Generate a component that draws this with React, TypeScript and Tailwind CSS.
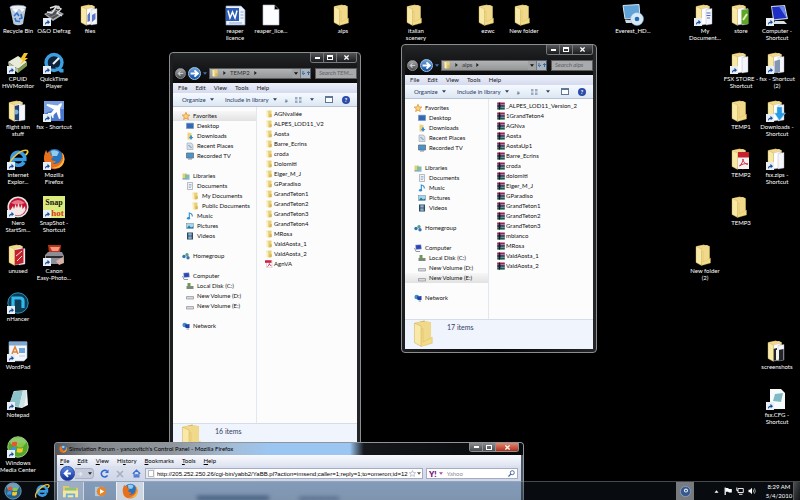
import React from 'react';

type P = { className?: string };

/* ---------- drawings ---------- */

function Folder({ kind = 'plain', className = 'size-[22px]' }: P & { kind?: string }) {
  return (
    <svg viewBox="1 0 22 22" className={className} aria-hidden="true">
      <path d="M3 2.500 L11 0.500 L12 1.500 L16.500 2 V18.500 L8 20Z" fill="#d3b158" />
      <path d="M4 2 L14 1 L16.500 2.500 V18.500 L4 18.500Z" fill="#f0d98a" />
      {kind !== 'plain' && <path d="M8.500 5 L15 3.500 V20 L8.500 21Z" fill="#fff" stroke="#b9bcc4" strokeWidth=".4" />}
      {kind !== 'plain' && <path d="M13 5.500 L19 4.500 V20 L13 21Z" fill="#f4f6fb" stroke="#a9adb8" strokeWidth=".4" />}
      {kind === 'files' && <path d="M9.500 11 L12 8 V17 L9.500 18Z M14 11 L17.500 9 V15 L14 18Z" fill="#5d76c9" />}
      {kind === 'sim' && <path d="M8.500 6 L13 5 V20 L8.500 20Z" fill="#1d4377" />}
      {kind === 'sim' && <circle cx="10" cy="12" r="2.500" fill="#7fb0e0" />}
      {kind === 'red' && <path d="M8.500 6 L17.500 4.500 V19 L8.500 21Z" fill="#c3202c" />}
      {kind === 'red' && <path d="M10 12 L16 7 M11 17 L16 12" stroke="#f8d9d9" strokeWidth="1" />}
      {kind === 'green' && <path d="M12.500 6 L19.500 5 V20 L12.500 20.500Z" fill="#5fa526" />}
      {kind === 'green' && <path d="M14 16 L18 10" stroke="#dff2b5" strokeWidth="2" />}
      {kind === 'docs' && <path d="M13.500 9 h4 M13.500 11.500 h4 M14 14 h3" stroke="#4d6bd0" strokeWidth="1.200" />}
      {kind === 'book' && <path d="M9.500 9 L15 7.500 V20 L9.500 21Z" fill="#8496b4" />}
      {kind === 'pdf' && <path d="M9 4 L20 4 V21 L9 21Z" fill="#f8f4f4" />}
      {kind === 'pdf' && <path d="M9 4 H20 V9.500 H9Z" fill="#c8202c" />}
      {kind === 'pdf' && <path d="M10.500 18 C13 16 14.500 12 14 11 C13.500 13 17 17 19 16 C16 15 12 16.500 10.500 18Z" fill="none" stroke="#c8202c" strokeWidth=".9" />}
      {kind === 'shots' && <path d="M8 9 L12 8 V20 L8 21Z M13.500 10 L18.500 9 V20 L13.500 21Z" fill="#23252b" />}
      {kind === 'shots' && <path d="M11 10 L14 9.500 V19.500 L11 20Z" fill="#f2f2f2" />}
      {kind === 'down' && <path d="M12 7 h5 v6 h3.500 L14.500 20.500 L9.500 13 H12Z" fill="#2a9be2" stroke="#9ad6fa" strokeWidth=".5" />}
      <path d="M3 2.500 L8.500 5 V21.500 L3 18.500Z" fill="#f8e9a8" stroke="#c9a952" strokeWidth=".4" />
      {kind === 'plain' && <path d="M8.500 21.500 V8 L10 7 L10 18 L17.500 14 V19Z" fill="#f2dc88" stroke="#cfae55" strokeWidth=".3" />}
    </svg>
  );
}

function Art({ name }: { name: string }) {
  if (name.startsWith('folder-')) return <Folder kind={name.slice(7)} />;
  return (
    <svg viewBox="0 0 22 22" className="size-[22px]" aria-hidden="true">
      {name === 'bin' && (
        <g>
          <path d="M3 3.500 L19 3 L16 20 Q11 22.500 6.500 20Z" fill="#b9c8da" />
          <ellipse cx="11" cy="3.500" rx="8" ry="2.300" fill="#e9eff6" stroke="#8e9db2" strokeWidth=".6" />
          <path d="M5 5 L9 9 L12 4 L15 8 L18 5" fill="#f7f9fc" />
          <path d="M7 12 l3 -3 2 3 M14 10 l1 4 -3 1 M8 14 l1 3 4 .5" fill="none" stroke="#3273cf" strokeWidth="1.600" />
        </g>
      )}
      {name === 'defrag' && (
        <g>
          <path d="M1 10 L12 5 L21 10 L10 17Z" fill="#a9abae" />
          <path d="M3 10 L12 6 L18 10 L10 15Z" fill="#4c4f55" />
          <path d="M3 12 L12 7 M6 14 L16 9" stroke="#8f9296" strokeWidth=".8" />
          <path d="M7 4 L13 2 L18 5 L14 9 L19 12 M13 3 L9 9 L4 8" fill="none" stroke="#e2e2e2" strokeWidth="1.400" />
          <circle cx="15" cy="3.500" r="2" fill="#c8cacc" />
        </g>
      )}
      {name === 'cpuid' && (
        <g>
          <path d="M1 10 L11 4 L20 10 L11 17Z" fill="#e6ecd9" />
          <path d="M1 10 L11 17 V21 L2 15Z" fill="#b4bfa4" />
          <path d="M11 17 L20 10 V14 L11 21Z" fill="#7e9a4e" />
          <path d="M17 1 L13 7.500 H16 L13 13 L21 6 H18 L21 1Z" fill="#f6c428" />
        </g>
      )}
      {name === 'quicktime' && (
        <g>
          <circle cx="11" cy="10.500" r="8" fill="#0e2239" stroke="#3c9fe0" strokeWidth="3.400" />
          <path d="M10 12 L16 6" stroke="#e6f3fd" strokeWidth="2" />
          <path d="M12 15 L17 20.500 H20.500 V17Z" fill="#3c9fe0" />
        </g>
      )}
      {name === 'fsx' && (
        <g>
          <rect x="1" y="1" width="20" height="20" fill="#4a78cf" />
          <path d="M1 1 H21 V9 Q10 9 1 14Z" fill="#7b9fe3" />
          <path d="M18.500 3 Q17 3 14.500 5.500 L4 4 L3.500 5.500 L11 9.500 L8 13 L5 13 L5 14 L8 15 L9.500 18 L10.500 18 L10.500 15 L13.500 12 L16 19 L17.500 18.500 L17 8 Q19.500 5 18.500 3Z" fill="#fff" />
        </g>
      )}
      {name === 'ie' && <IeMark />}
      {name === 'firefox' && <FirefoxMark />}
      {name === 'nero' && (
        <g>
          <circle cx="11" cy="11" r="9.800" fill="#c3122f" stroke="#e3e3e3" strokeWidth="1.600" />
          <path d="M4 7 Q11 1 18 7 Q11 10 4 7Z" fill="#e87787" />
          <path d="M3.500 14 L6 10 L7 13 L8.500 8 L10 12 L11.500 7 L13 12 L15 8 L15.500 13 L18 10 L18.500 14 Q16 19 11 19.500 Q6 19 3.500 14Z" fill="#f4e8e6" />
        </g>
      )}
      {name === 'snapshot' && (
        <g>
          <rect width="22" height="22" fill="#dcec7c" />
          <text x="11" y="9" textAnchor="middle" fontSize="8" fontWeight="bold" fontFamily="Liberation Serif, serif" fill="#141414">Snap</text>
          <text x="12" y="20" textAnchor="middle" fontSize="9" fontWeight="bold" fontFamily="Liberation Serif, serif" fill="#d8331c">Shot</text>
        </g>
      )}
      {name === 'canon' && (
        <g>
          <path d="M5 1 H18 L17 9 H6Z" fill="#b5331f" />
          <path d="M7 3 H17 L15 7 H9Z" fill="#f49a7a" />
          <path d="M2 11 L5 8 H19 L21 12 V18 L17 20 H5 L2 16Z" fill="#8b8f95" />
          <path d="M3 12 H20 V14 H3Z" fill="#2b2d31" />
          <path d="M13 17 L20 13 L21 19 L16 21Z" fill="#d7b1a4" />
        </g>
      )}
      {name === 'nhancer' && (
        <g>
          <circle cx="11" cy="11" r="10.200" fill="#0d3c55" stroke="#2b93bb" strokeWidth="1" />
          <path d="M6 16 V6 H13 Q16 6 16 9 V16" fill="none" stroke="#31b9ee" strokeWidth="3.200" />
        </g>
      )}
      {name === 'wordpad' && (
        <g>
          <path d="M2 2 H20 V18 L17 21 H2Z" fill="#f3f7fb" stroke="#9ab6cf" strokeWidth=".6" />
          <rect x="2" y="1.500" width="18" height="4" fill="#7ea8cf" />
          <path d="M5 14 L8 7 L11 14 M6 12 H10" fill="none" stroke="#e58232" strokeWidth="1.500" />
          <rect x="12" y="8" width="6" height="5" fill="#6fa6da" />
          <path d="M12 16 H18" stroke="#c4cfda" />
        </g>
      )}
      {name === 'notepad' && (
        <g>
          <path d="M7 3 L20 2 L21 17 L15 20 L2 18Z" fill="#eef3f4" />
          <path d="M6.500 3.500 L16 2.500 L12 19 L2 17.500Z" fill="#8cc3cb" />
          <path d="M16 2.500 L20 3 L17 19 L12 19Z" fill="#cfe3e6" />
        </g>
      )}
      {name === 'media' && (
        <g>
          <circle cx="11" cy="11" r="10.300" fill="#53a82c" stroke="#b5dd97" strokeWidth=".8" />
          <ellipse cx="11" cy="6" rx="8" ry="4.500" fill="#a8d888" opacity=".7" />
          <WinFlag />
        </g>
      )}
      {name === 'word' && (
        <g>
          <path d="M2 2 H17 L21 6 V21 H2Z" fill="#eef3fb" stroke="#7f9cd0" strokeWidth=".7" />
          <rect x="2" y="4" width="13" height="13" fill="#2c5cb4" />
          <path d="M4 6.500 L6 14 L8.500 8 L11 14 L13 6.500" fill="none" stroke="#fff" strokeWidth="1.500" />
          <path d="M16.500 8 H19.500 M16.500 11 H19.500 M16.500 14 H19.500 M5 19 H18" stroke="#8fa7d4" />
        </g>
      )}
      {name === 'page' && <path d="M3 1 H14.500 L19 5.500 V21 H3Z M14.500 1 V5.500 H19" fill="#fcfdff" stroke="#b9bec8" strokeWidth=".6" />}
      {name === 'everest' && (
        <g>
          <path d="M1 1.500 L17 .500 L18 14 L3 15Z" fill="#5fa3d8" stroke="#d5e4f0" strokeWidth="1" />
          <path d="M3 16 H14 L15 19 H4Z" fill="#cdd8e3" />
          <circle cx="15" cy="15" r="6.500" fill="#d6e9f7" stroke="#7fa9ca" strokeWidth=".5" />
          <circle cx="15" cy="15" r="2.300" fill="#276cae" />
        </g>
      )}
      {name === 'computer' && (
        <g>
          <path d="M5 2 L19 1 L22 15 L7 16.500Z" fill="#c8d2e2" />
          <path d="M6 3 L18 2.200 L20.500 14 L8 15.200Z" fill="#1d2fc4" />
          <path d="M13 2.500 L18 2.200 L20.500 14Z" fill="#6b85ee" />
          <path d="M9 17 H18 L21 20 H7Z" fill="#d9dee6" />
        </g>
      )}
      {name === 'cfg' && (
        <g>
          <path d="M4 1 H15 L19 5 V21 H4Z" fill="#f7fafb" />
          <path d="M9 6 L17 5 L15 14 L7 13Z" fill="#7fbac4" />
        </g>
      )}
    </svg>
  );
}

function IeMark() {
  return (
    <g>
      <path d="M17 14 A6.500 6.500 0 1 1 17.800 11.500 H6" fill="none" stroke="#3b9be2" strokeWidth="3.600" />
      <path d="M3 20 Q0 16 7 9 Q15 1 20 2.500 Q22 4 18.500 7" fill="none" stroke="#f2c33c" strokeWidth="1.700" />
    </g>
  );
}

function FirefoxMark() {
  return (
    <g>
      <circle cx="11.500" cy="9.500" r="8.500" fill="#2873bd" />
      <path d="M8 3 Q12 1 16 4 L14 8 L9 8Z" fill="#8fccf2" />
      <path d="M3 2 Q.500 8 1 12 Q2 21 11.500 21.300 Q21 20.500 21.500 11 Q21.500 6.500 18.500 4 Q20 9 17.500 13 Q14 17.500 9.500 15.500 Q12.500 15 13 13 Q9 13 8 11 L10.500 9 L7.500 7 Q7 5 8 3.500 Q5.500 4 4.500 5Z" fill="#e8701c" />
      <path d="M18.500 4 Q21.500 9 19 14 Q16 19.500 9 19.500 Q18 22 21 14 Q22.500 8 18.500 4Z" fill="#f9b73e" />
    </g>
  );
}

function WinFlag() {
  return (
    <g>
      <path d="M5 6.500 Q7.500 5 10.300 6.300 L9.600 10.500 Q7 9.300 4.300 10.800Z" fill="#e8562a" />
      <path d="M11.300 6.600 Q14 8 17 6.600 L16.300 10.800 Q13.500 12 10.600 10.900Z" fill="#8cc63e" />
      <path d="M4.100 11.800 Q7 10.400 9.400 11.600 L8.700 15.600 Q6 14.500 3.500 16Z" fill="#3d95dc" />
      <path d="M10.400 12 Q13.200 13.200 16.100 12 L15.400 16 Q12.500 17.300 9.700 16.100Z" fill="#fbc72e" />
    </g>
  );
}

function Small({ name }: { name: string }) {
  return (
    <svg viewBox="0 0 8 8" className="size-[8px] shrink-0" aria-hidden="true">
      {name === 'star' && <path d="M4 .3 L5.100 2.900 L7.800 3.100 L5.700 4.900 L6.400 7.600 L4 6.100 L1.600 7.600 L2.300 4.900 L.2 3.100 L2.900 2.900Z" fill="#fbd27c" stroke="#e38b1f" strokeWidth=".7" />}
      {name === 'desktop' && <path d="M.5 1.200 H7.500 V6.500 H.5Z" fill="#3569b4" stroke="#6e8fbd" strokeWidth=".6" />}
      {name === 'downloads' && <g><path d="M1.500 .5 L5.500 1 V7.500 H1.500Z" fill="#ecd27a" /><path d="M4 3.500 H6 V5 H7.500 L5 7.800 L2.800 5 H4Z" fill="#3d8fd2" /></g>}
      {name === 'recent' && <g><path d="M1 1 H5.500 L7 3 V7.500 H1Z" fill="#d6dee7" stroke="#8895a5" strokeWidth=".5" /><path d="M2.500 3 L5.500 6" stroke="#6f8aa8" /></g>}
      {name === 'tv' && <path d="M.5 1 H7.500 V6 H.5Z M2 7 H6" fill="#4b94c8" stroke="#5d7389" strokeWidth=".8" />}
      {name === 'libraries' && <g><rect x=".5" y="1.500" width="4.500" height="5.500" fill="#e5cf73" /><rect x="3" y="2.500" width="4.500" height="4" fill="#82bba8" /><path d="M.5 7 H7.500" stroke="#4c98c9" /></g>}
      {name === 'documents' && <g><path d="M1.500 .5 H6.500 V7.500 H1.500Z" fill="#f2f4f7" stroke="#8993a1" strokeWidth=".6" /><path d="M2.800 2.500 H5.500 M2.800 4 H5.500 M2.800 5.500 H5" stroke="#7691b4" strokeWidth=".6" /></g>}
      {name === 'music' && <path d="M3.300 6.300 V1 Q6.500 1.500 6.300 4.500" fill="none" stroke="#2f8fd0" strokeWidth="1.100" />}
      {name === 'music' && <ellipse cx="2.500" cy="6.300" rx="1.600" ry="1.200" fill="#2f8fd0" />}
      {name === 'pictures' && <g><rect x=".5" y="1.500" width="7" height="5" fill="#a8d6ea" stroke="#6f8594" strokeWidth=".5" /><path d="M.8 6.300 L3 3.500 L5 5.500 L7.200 4.500 V6.300Z" fill="#237aa6" /></g>}
      {name === 'videos' && <g><rect x="1" y=".5" width="6" height="7" fill="#31475c" /><rect x="2.300" y="1.200" width="3.400" height="2.400" fill="#87b2d3" /><rect x="2.300" y="4.400" width="3.400" height="2.400" fill="#87b2d3" /></g>}
      {name === 'homegroup' && <g><circle cx="2" cy="4.500" r="1.700" fill="#3277a6" /><circle cx="5" cy="2.700" r="1.700" fill="#5c9c8c" /><circle cx="6" cy="5.800" r="1.700" fill="#3a74b5" /></g>}
      {name === 'computer' && <g><path d="M1.500 1 L7 .7 L7.500 5 L2 5.500Z" fill="#2945b8" stroke="#aab4c6" strokeWidth=".5" /><path d="M.5 4 L2 7.500 H6" stroke="#8b96a8" fill="none" /></g>}
      {name === 'disk' && <g><path d="M.5 4 H7.500 V7 H.5Z" fill="#7d8a77" /><path d="M1.500 1 H4.500 V4 H1.500Z" fill="#6e9a4c" /></g>}
      {name === 'drive' && <path d="M.5 4.500 H7.500 V7 H.5Z" fill="#d8dadd" stroke="#8c9096" strokeWidth=".7" />}
      {name === 'network' && <g><circle cx="2.700" cy="3" r="2.300" fill="#3c8fca" /><path d="M3 2.500 L7.500 2 V6 H3.500Z" fill="#2340a8" /><path d="M4.500 7 H7" stroke="#8793a8" /></g>}
      {name === 'folder' && <g><path d="M1.500 .7 L6.500 .5 V7 L3 7.500Z" fill="#e9cf77" /><path d="M1.500 .7 L3.300 1.500 V7.700 L1.500 7Z" fill="#fbeeb6" /><path d="M4.500 4.500 L6.700 4 V7 L4.500 7.500Z" fill="#d8b553" /></g>}
      {name === 'rar' && <g><rect x=".2" y=".5" width="7.600" height="2.300" fill="#96244f" /><rect x=".2" y="2.900" width="7.600" height="2.200" fill="#27356b" /><rect x=".2" y="5.200" width="7.600" height="2.400" fill="#1c5c49" /><path d="M2.500 .5 V7.600" stroke="#20151a" strokeWidth="1.200" /><path d="M4 2.800 H7.800 M4 5.100 H7.800" stroke="#e8e2e6" strokeWidth=".4" /></g>}
      {name === 'pdf' && <g><path d="M1.500 .3 H7 V7.700 H1.500Z" fill="#fff" stroke="#c9a5ab" strokeWidth=".4" /><rect x="0" y=".3" width="6.500" height="2.500" fill="#cf1f3e" /><path d="M2.500 6.700 Q4.500 5 4.300 3.500 Q4.500 5.500 6.500 5.800" fill="none" stroke="#cf1f3e" strokeWidth=".8" /></g>}
    </svg>
  );
}

function Caret({ className = 'text-[#2c3f5c]' }: P) {
  return (
    <svg viewBox="0 0 4 3" className={`h-[3px] w-[4px] shrink-0 ${className}`} aria-hidden="true">
      <path d="M0 .3 H4 L2 2.800Z" fill="currentColor" />
    </svg>
  );
}

function Right() {
  return (
    <svg viewBox="0 0 3 4" className="h-[4px] w-[3px] shrink-0" aria-hidden="true">
      <path d="M.3 0 V4 L2.800 2Z" fill="#222" />
    </svg>
  );
}

/* ---------- desktop shortcuts ---------- */

type Shortcut = { col: number; row: number; art: string; label: string; link?: boolean };

const shortcuts: Shortcut[] = [
  { col: 0, row: 0, art: 'bin', label: 'Recycle Bin' },
  { col: 1, row: 0, art: 'defrag', label: 'O&O Defrag', link: true },
  { col: 2, row: 0, art: 'folder-files', label: 'files' },
  { col: 0, row: 1, art: 'cpuid', label: 'CPUID\nHWMonitor', link: true },
  { col: 1, row: 1, art: 'quicktime', label: 'QuickTime\nPlayer', link: true },
  { col: 0, row: 2, art: 'folder-sim', label: 'flight sim\nstuff' },
  { col: 1, row: 2, art: 'fsx', label: 'fsx - Shortcut', link: true },
  { col: 0, row: 3, art: 'ie', label: 'Internet\nExplor...', link: true },
  { col: 1, row: 3, art: 'firefox', label: 'Mozilla\nFirefox', link: true },
  { col: 0, row: 4, art: 'nero', label: 'Nero\nStartSm...', link: true },
  { col: 1, row: 4, art: 'snapshot', label: 'SnapShot -\nShortcut', link: true },
  { col: 0, row: 5, art: 'folder-red', label: 'unused' },
  { col: 1, row: 5, art: 'canon', label: 'Canon\nEasy-Photo...', link: true },
  { col: 0, row: 6, art: 'nhancer', label: 'nHancer', link: true },
  { col: 0, row: 7, art: 'wordpad', label: 'WordPad', link: true },
  { col: 0, row: 8, art: 'notepad', label: 'Notepad', link: true },
  { col: 0, row: 9, art: 'media', label: 'Windows\nMedia Center', link: true },
  { col: 6, row: 0, art: 'word', label: 'reaper\nlicence' },
  { col: 7, row: 0, art: 'page', label: 'reaper_lice...' },
  { col: 9, row: 0, art: 'folder-plain', label: 'alps' },
  { col: 11, row: 0, art: 'folder-plain', label: 'italian\nscenery' },
  { col: 13, row: 0, art: 'folder-plain', label: 'ezwc' },
  { col: 14, row: 0, art: 'folder-plain', label: 'New folder' },
  { col: 17, row: 0, art: 'everest', label: 'Everest_HD...' },
  { col: 19, row: 0, art: 'folder-docs', label: 'My\nDocument...', link: true },
  { col: 20, row: 0, art: 'folder-green', label: 'store' },
  { col: 21, row: 0, art: 'computer', label: 'Computer -\nShortcut', link: true },
  { col: 20, row: 1, art: 'folder-papers', label: 'FSX STORE -\nShortcut', link: true },
  { col: 21, row: 1, art: 'folder-book', label: 'fsx - Shortcut\n(2)', link: true },
  { col: 20, row: 2, art: 'folder-plain', label: 'TEMP1' },
  { col: 21, row: 2, art: 'folder-down', label: 'Downloads -\nShortcut', link: true },
  { col: 20, row: 3, art: 'folder-pdf', label: 'TEMP2' },
  { col: 21, row: 3, art: 'folder-papers', label: 'fsx.zips -\nShortcut', link: true },
  { col: 20, row: 4, art: 'folder-plain', label: 'TEMP3' },
  { col: 19, row: 5, art: 'folder-plain', label: 'New folder\n(2)' },
  { col: 21, row: 7, art: 'folder-shots', label: 'screenshots' },
  { col: 21, row: 8, art: 'cfg', label: 'fsx.CFG -\nShortcut', link: true },
];

const COLUMN = 36.15;
const ROW = 48;

function DesktopIcon({ item }: { item: Shortcut }) {
  return (
    <button
      type="button"
      className="absolute flex w-9 flex-col items-center gap-px text-white"
      style={{ left: Math.round(item.col * COLUMN), top: item.row * ROW + 4 }}
    >
      <span className="relative">
        <Art name={item.art} />
        {item.link && (
          <svg viewBox="0 0 8 8" className="absolute bottom-0 left-0 size-[8px]" aria-hidden="true">
            <rect width="8" height="8" fill="#e8eef6" />
            <path d="M2 7 Q1.500 4 4.500 3.500 V1.800 L7 4.200 L4.700 6.300 V5 Q3 5 2 7Z" fill="#1c4f98" />
          </svg>
        )}
      </span>
      <span className="text-center leading-[7px] whitespace-pre">{item.label}</span>
    </button>
  );
}

/* ---------- explorer windows ---------- */

type Node = { icon: string; label: string; depth?: number; gap?: boolean; active?: boolean };

function tree(extra: Node[], active: string): Node[] {
  const nodes: Node[] = [
    { icon: 'star', label: 'Favorites' },
    { icon: 'desktop', label: 'Desktop', depth: 1 },
    { icon: 'downloads', label: 'Downloads', depth: 1 },
    { icon: 'recent', label: 'Recent Places', depth: 1 },
    { icon: 'tv', label: 'Recorded TV', depth: 1 },
    { icon: 'libraries', label: 'Libraries', gap: true },
    { icon: 'documents', label: 'Documents', depth: 1 },
    ...extra,
    { icon: 'music', label: 'Music', depth: 1 },
    { icon: 'pictures', label: 'Pictures', depth: 1 },
    { icon: 'videos', label: 'Videos', depth: 1 },
    { icon: 'homegroup', label: 'Homegroup', gap: true },
    { icon: 'computer', label: 'Computer', gap: true },
    { icon: 'disk', label: 'Local Disk (C:)', depth: 1 },
    { icon: 'drive', label: 'New Volume (D:)', depth: 1 },
    { icon: 'drive', label: 'New Volume (E:)', depth: 1 },
    { icon: 'network', label: 'Network', gap: true },
  ];
  return nodes.map((n) => ({ ...n, active: n.label === active }));
}

const indent = ['pl-[9px]', 'pl-[13px]', 'pl-[18px]'];

function Controls() {
  const b = 'flex h-[9px] items-center justify-center border-r border-[#77797c] bg-linear-to-b from-[#55575a] to-[#1c1d1f] last:border-r-0';
  return (
    <div className="flex overflow-hidden rounded-b-[3px] border border-t-0 border-[#77797c]">
      <button type="button" aria-label="Minimize" className={`${b} w-[13px]`}><span className="h-[2px] w-[5px] bg-white" /></button>
      <button type="button" aria-label="Maximize" className={`${b} w-[13px]`}><span className="h-[5px] w-[6px] border border-t-2 border-white" /></button>
      <button type="button" aria-label="Close" className={`${b} w-[19px]`}>
        <svg viewBox="0 0 6 6" className="size-[5px]"><path d="M.5 .5 L5.500 5.500 M5.500 .5 L.5 5.500" stroke="#fff" strokeWidth="1.500" /></svg>
      </button>
    </div>
  );
}

function Explorer({ place, search, nodes, files, count, className }: {
  place: string; search: string; nodes: Node[]; files: { icon: string; label: string }[]; count: string; className: string;
}) {
  return (
    <section aria-label={place} className={`absolute flex flex-col rounded-[4px] border border-[#8b8d90] bg-linear-to-r from-[#1d1e20] via-[#08080a] to-[#242527] px-[3px] pb-[3px] ${className}`}>
      <header className="bg-linear-to-b from-[#242527] to-[#0a0a0b]">
        <div className="flex justify-end"><Controls /></div>
        <div className="flex h-[20px] items-center pl-[2px]">
          <button type="button" aria-label="Back" className="flex size-[11px] items-center justify-center rounded-full border border-[#8b8d90] bg-linear-to-b from-[#a4a6a9] to-[#4b4d50]">
            <svg viewBox="0 0 8 8" className="size-[7px]"><path d="M7 4 H2 M4 1.500 L1.500 4 L4 6.500" fill="none" stroke="#c9cbce" strokeWidth="1.400" /></svg>
          </button>
          <button type="button" aria-label="Forward" className="ml-[2px] flex size-[13px] items-center justify-center rounded-full border border-[#9ec7ef] bg-linear-to-b from-[#6ea3d8] to-[#0d4fa6]">
            <svg viewBox="0 0 8 8" className="size-[9px]"><path d="M.5 4 H6 M4 1.200 L7 4 L4 6.800" fill="none" stroke="#fff" strokeWidth="1.700" /></svg>
          </button>
          <Caret className="mx-[2px] text-[#3b78b8]" />
          <div className="flex h-[11px] min-w-0 flex-1 border border-[#5a5c5f] bg-[#a1a2a4]">
            <div className="flex flex-1 items-center gap-1 bg-linear-to-b from-[#b2b3b5] to-[#959698] pl-px text-[#333]">
              <Small name="folder" />
              <Right />
              <span>{place}</span>
              <Right />
            </div>
            <button type="button" aria-label="Previous locations" className="flex w-2 items-center justify-center"><Caret className="text-[#111]" /></button>
            <button type="button" aria-label="Refresh" className="flex w-[10px] items-center justify-center border-l border-[#77797c] bg-[#abb4be]">
              <svg viewBox="0 0 8 6" className="h-[6px] w-[8px]"><path d="M1 1 V4 M0 3 L1.300 4.500 L3 3 M6.500 5 V2 M5 3 L6.500 1.500 L8 3" fill="none" stroke="#23639f" strokeWidth=".9" /></svg>
            </button>
          </div>
          <div className="ml-[4px] flex h-[11px] w-[42px] items-center overflow-hidden border border-[#5a5c5f] bg-[#a9aaac]">
            <input aria-label={search} placeholder={search} className="w-full pl-[3px] italic placeholder:text-[#616366]" />
          </div>
        </div>
      </header>

      <div className="flex min-h-0 flex-1 flex-col bg-[#fcfcfd]">
        <nav className="flex h-[10px] items-center gap-2 bg-linear-to-b from-[#eceffa] to-[#d5daee] pl-[5px] text-[#1a1a1a]">
          {['File', 'Edit', 'View', 'Tools', 'Help'].map((m) => <button type="button" key={m}>{m}</button>)}
        </nav>
        <div className="flex h-[14px] items-center border-b border-[#b6c4d6] bg-linear-to-b from-[#f6fafe] to-[#dce7f4] pr-[7px] pl-[9px] text-[#1e395b]">
          <button type="button" className="flex w-[43px] items-center gap-1">Organize <Caret /></button>
          <button type="button" className="flex items-center gap-1 whitespace-nowrap">Include in library <Caret /></button>
          <button type="button" aria-label="More commands" className="ml-[8px] text-[8px] leading-none">»</button>
          <button type="button" aria-label="Change your view" className="ml-auto flex items-center gap-2">
            <svg viewBox="0 0 7 6" className="h-[6px] w-[7px]">
              <path d="M0 0 H2.500 V2.500 H0Z M4 0 H6.500 V2.500 H4Z M0 3.500 H2.500 V6 H0Z M4 3.500 H6.500 V6 H4Z" fill="#9cabbd" />
            </svg>
            <Caret />
          </button>
          <button type="button" aria-label="Show the preview pane" className="ml-[11px] h-[7px] w-2 border border-t-2 border-[#5f7896] bg-white" />
          <button type="button" aria-label="Get help" className="ml-[9px] flex size-2 items-center justify-center rounded-full bg-[#2c4aa8] font-bold text-white">?</button>
        </div>

        <div className="flex min-h-0 flex-1">
          <ul className="w-[84px] shrink-0 border-r border-[#e3e7ee] pt-[4px]">
            {nodes.map((n) => (
              <li key={n.label} className={n.gap ? 'mt-[10px]' : ''}>
                <button
                  type="button"
                  className={`flex h-[10px] w-full items-center gap-[3px] whitespace-nowrap text-[#111] ${indent[n.depth ?? 0]} ${n.active ? 'bg-linear-to-b from-[#f7f7f7] to-[#e2e2e3]' : ''}`}
                >
                  <Small name={n.icon === 'sub' ? 'folder' : n.icon} />
                  {n.label}
                </button>
              </li>
            ))}
          </ul>
          <ul className="min-w-0 flex-1 pt-[2px] pl-2">
            {files.map((f) => (
              <li key={f.label}>
                <button type="button" className="flex h-[10px] items-center gap-px whitespace-nowrap text-[#111]">
                  <Small name={f.icon} />
                  {f.label}
                </button>
              </li>
            ))}
          </ul>
        </div>

        <footer className="flex h-[30px] gap-[8px] border-t border-[#d5dceb] bg-[#f0f4fc] pl-[7px] text-[#32425f]">
          <Folder className="size-[27px]" />
          <p className="pt-[3px] text-[7px] leading-[8px]">{count}</p>
        </footer>
      </div>
    </section>
  );
}

const subfolders: Node[] = [
  { icon: 'sub', label: 'My Documents', depth: 2 },
  { icon: 'sub', label: 'Public Documents', depth: 2 },
];

const tempFiles = [
  ...['AGNvallée', 'ALPES_LOD11_V2', 'Aosta', 'Barre_Ecrins', 'croda', 'Dolomiti', 'Eiger_M_J', 'GParadiso', 'GrandTeton1',
    'GrandTeton2', 'GrandTeton3', 'GrandTeton4', 'MRosa', 'ValdAosta_1', 'ValdAosta_2'].map((label) => ({ icon: 'folder', label })),
  { icon: 'pdf', label: 'AgnVA' },
];

const alpsFiles = ['_ALPES_LOD11_Version_2', '1GrandTeton4', 'AGNva', 'Aosta', 'AostaUp1', 'Barre_Ecrins', 'croda', 'dolomiti',
  'Eiger_M_J', 'GParadiso', 'GrandTeton1', 'GrandTeton2', 'GrandTeton3', 'mbianco', 'MRosa', 'ValdAosta_1', 'ValdAosta_2',
].map((label) => ({ icon: 'rar', label }));

/* ---------- browser window ---------- */

function Browser() {
  const ctl = 'flex h-[8px] items-center justify-center border-r border-[#8e9094] bg-linear-to-b from-[#8a8c8f] to-[#4a4c50]';
  return (
    <section aria-label="Mozilla Firefox" className="absolute bottom-0 left-[54px] flex h-[58px] w-[470px] flex-col rounded-t-[4px] border border-b-0 border-[#90959b] bg-[#4b5968] px-[2px]">
      <header className="-mx-[2px] flex h-[12px] items-center rounded-t-[3px] bg-[linear-gradient(90deg,#55575b_0%,#85898e_8%,#8f959c_25%,#a3bdd8_38%,#9cc6f2_46%,#9cc6f2_63%,#15171a_66%,#08090b_100%)] pl-1">
        <svg viewBox="0 0 22 22" className="size-[8px]" aria-hidden="true"><FirefoxMark /></svg>
        <h1 className="ml-[2px] leading-[10px] whitespace-nowrap text-black">Simviation Forum - yancovitch's Control Panel - Mozilla Firefox</h1>
        <div className="mr-1 ml-auto flex self-start overflow-hidden rounded-b-[3px] border border-t-0 border-[#8e9094]">
          <button type="button" aria-label="Minimize" className={`${ctl} w-[13px]`}><span className="h-[2px] w-[5px] bg-white" /></button>
          <button type="button" aria-label="Maximize" className={`${ctl} w-[13px]`}><span className="h-[5px] w-[6px] border border-white" /></button>
          <button type="button" aria-label="Close" className="flex h-[8px] w-[22px] items-center justify-center bg-linear-to-b from-[#e08a75] to-[#b32a14]">
            <svg viewBox="0 0 6 6" className="size-[5px]"><path d="M.5 .5 L5.500 5.500 M5.500 .5 L.5 5.500" stroke="#fff" strokeWidth="1.500" /></svg>
          </button>
        </div>
      </header>
      <nav className="flex h-[11px] items-center gap-2 bg-linear-to-b from-[#f9fafd] to-[#dfe4f2] pl-[3px] text-black">
        {['File', 'Edit', 'View'].map((m) => <button type="button" key={m}><u>{m[0]}</u>{m.slice(1)}</button>)}
        <button type="button">Hi<u>s</u>tory</button>
        {['Bookmarks', 'Tools', 'Help'].map((m) => <button type="button" key={m}><u>{m[0]}</u>{m.slice(1)}</button>)}
      </nav>
      <div className="flex h-[15px] items-center bg-linear-to-b from-[#dce1f0] to-[#cfd6e8] pr-[3px] pl-[3px]">
        <button type="button" aria-label="Back" className="flex size-[15px] items-center justify-center rounded-full border border-[#27459b] bg-linear-to-b from-[#5d8be6] to-[#142f97]">
          <svg viewBox="0 0 8 8" className="size-[9px]"><path d="M7 4 H2 M4.500 1 L1.500 4 L4.500 7" fill="none" stroke="#fff" strokeWidth="1.700" /></svg>
        </button>
        <button type="button" aria-label="Forward" className="flex h-[11px] w-[19px] items-center justify-end gap-[5px] rounded-r-[4px] border border-l-0 border-[#aab1c2] bg-[#c6ccdb] pr-px">
          <svg viewBox="0 0 8 8" className="size-[6px]"><path d="M1 4 H6 M4 1.500 L6.500 4 L4 6.500" fill="none" stroke="#e6e9f2" strokeWidth="1.500" /></svg>
          <Caret className="text-[#222]" />
        </button>
        <button type="button" aria-label="Reload" className="ml-[6px]">
          <svg viewBox="0 0 9 9" className="size-[9px]"><path d="M7.500 6.300 A3.300 3.300 0 1 1 7 2.300" fill="none" stroke="#2f6bd3" strokeWidth="1.600" /><path d="M8.500 .5 V4 H5Z" fill="#2f6bd3" /></svg>
        </button>
        <button type="button" aria-label="Stop" className="ml-[7px]">
          <svg viewBox="0 0 8 8" className="size-[8px]"><path d="M1 1 L7 7 M7 1 L1 7" stroke="#a9aebb" strokeWidth="1.600" /></svg>
        </button>
        <button type="button" aria-label="Home" className="ml-[8px]">
          <svg viewBox="0 0 9 9" className="size-[9px]"><path d="M.8 4.800 L4.500 1.200 L8.200 4.800 M2.200 4.500 V8 H3.800 V5.800 H5.200 V8 H6.800 V4.500" fill="none" stroke="#3c6fce" strokeWidth="1.200" /></svg>
        </button>
        <div className="ml-[4px] flex h-[11px] min-w-0 flex-1 items-center border border-[#a4adbf] bg-white pr-px">
          <span className="flex h-full w-[9px] shrink-0 items-center justify-center bg-[#ececee]"><span className="h-[7px] w-[6px] border border-[#b5b9c1] bg-white" /></span>
          <input aria-label="Address" readOnly className="min-w-0 flex-1 pl-[2px] font-['Liberation_Sans',sans-serif] text-black" value="http://205.252.250.26/cgi-bin/yabb2/YaBB.pl?action=imsend;caller=1;reply=1;to=omeron;id=12" />
          <svg viewBox="0 0 8 8" className="size-[7px] shrink-0" aria-hidden="true"><path d="M4 .6 L5 3 L7.600 3.100 L5.600 4.800 L6.300 7.400 L4 6 L1.700 7.400 L2.400 4.800 L.4 3.100 L3 3Z" fill="#fff" stroke="#8b94a5" strokeWidth=".6" /></svg>
          <button type="button" aria-label="Show history" className="ml-px"><Caret className="text-[#555]" /></button>
        </div>
        <div className="ml-[3px] flex h-[11px] w-[92px] items-center border border-[#a4adbf] bg-white px-[2px]">
          <span className="text-[8px] leading-none font-extrabold text-[#7a1487]">Y!</span>
          <Caret className="ml-[2px] text-[#a04ea9]" />
          <input aria-label="Search with Yahoo" placeholder="Yahoo" className="min-w-0 flex-1 pl-1 placeholder:text-[#8d8f94]" />
          <svg viewBox="0 0 7 7" className="size-[7px]" aria-hidden="true"><circle cx="4.300" cy="2.700" r="2" fill="none" stroke="#3d6297" strokeWidth=".9" /><path d="M2.800 4.200 L.5 6.500" stroke="#3d6297" strokeWidth="1.200" /></svg>
        </div>
      </div>
      <div className="flex flex-1 items-end gap-[30px] overflow-hidden bg-linear-to-b from-[#a2bde2] to-[#b7d2f3] pl-[140px]">
        <span className="h-[4px] w-[72px] bg-[#52719c] blur-[2px]" />
        <span className="h-[3px] w-[40px] bg-[#6785ae] blur-[2px]" />
      </div>
    </section>
  );
}

/* ---------- taskbar ---------- */

function Taskbar() {
  return (
    <footer className="absolute inset-x-0 bottom-0 flex h-[19px] items-center border-t border-white/25 bg-linear-to-b from-[#22303c]/25 to-[#16222e]/35 text-white">
      <button type="button" aria-label="Start" className="ml-[4px]">
        <svg viewBox="0 0 22 22" className="size-[18px]"><circle cx="11" cy="11" r="10" fill="#23618d" stroke="#7fa4bd" strokeWidth="1" /><ellipse cx="11" cy="6" rx="7.500" ry="4.500" fill="#8db9d3" opacity=".7" /><WinFlag /></svg>
      </button>
      <button type="button" aria-label="Internet Explorer" className="ml-[12px]">
        <svg viewBox="0 0 22 22" className="size-[16px]"><IeMark /></svg>
      </button>
      <button type="button" aria-label="Windows Explorer" className="ml-[7px] flex h-full w-[27px] items-center justify-center border-x border-white/50 bg-white/20">
        <svg viewBox="0 0 18 16" className="h-[15px] w-[17px]">
          <path d="M1 2 H7 L8 4 H17 V14 H1Z" fill="#e7c766" /><path d="M3 4 H15 V9 H3Z" fill="#8cc27a" /><path d="M1 7 H17 V14 H1Z" fill="#f7e6a0" /><path d="M5 15 V11 H13 V15" fill="none" stroke="#69b2dd" strokeWidth="2" />
        </svg>
      </button>
      <button type="button" aria-label="Windows Media Player" className="flex h-full w-[32px] items-center justify-center">
        <svg viewBox="0 0 14 14" className="size-[13px]"><rect x="1" y="2" width="9" height="10" fill="#b9d5ee" opacity=".8" /><circle cx="8" cy="7" r="5" fill="#ea8422" /><path d="M6.500 4.300 V9.700 L11 7Z" fill="#fff" /></svg>
      </button>
      <button type="button" aria-label="Mozilla Firefox" className="flex h-full w-[28px] items-center justify-center border-x border-white/60 bg-white/60">
        <svg viewBox="0 0 22 22" className="size-[16px]"><FirefoxMark /></svg>
      </button>
      <button type="button" aria-label="Disc recorder" className="ml-auto flex size-[18px] items-center justify-center bg-[#777b80]">
        <svg viewBox="0 0 14 14" className="size-[13px]"><circle cx="7" cy="7" r="5.500" fill="#35588f" stroke="#9fb0c8" strokeWidth=".7" /><circle cx="7.500" cy="6" r="2.200" fill="#dfe7f3" /><circle cx="7.500" cy="6" r=".9" fill="#213a66" /></svg>
      </button>
      <div className="ml-[20px] flex items-center gap-[4px]">
        <button type="button" aria-label="Show hidden icons" className="mr-px">
          <svg viewBox="0 0 4 3" className="h-[3px] w-[5px]"><path d="M0 2.800 H4 L2 .3Z" fill="#fff" /></svg>
        </button>
        <button type="button" aria-label="Action Center">
          <svg viewBox="0 0 8 8" className="size-[8px]"><path d="M1.200 .5 V8" stroke="#fff" strokeWidth="1.200" /><path d="M1.500 1 H4 L5 2 H7.800 V5.500 H5 L4 4.700 H1.500Z" fill="#fff" /></svg>
        </button>
        <button type="button" aria-label="Network">
          <svg viewBox="0 0 8 8" className="size-[8px]"><path d="M2 1.500 H7.300 V5.500 H2Z M3 7.300 H6.500 M.8 .5 V3.500 H2" fill="none" stroke="#fff" strokeWidth=".9" /></svg>
        </button>
        <button type="button" aria-label="Volume">
          <svg viewBox="0 0 8 8" className="size-[8px]"><path d="M.5 2.800 H2 L4 .8 V7.200 L2 5.200 H.5Z" fill="#fff" /><path d="M5.200 2.500 Q6.200 4 5.200 5.500 M6.400 1.300 Q8.200 4 6.400 6.700" fill="none" stroke="#ddd" strokeWidth=".7" /></svg>
        </button>
      </div>
      <time className="ml-[9px] w-[28px] text-center leading-[9px]">8:29 AM<br />5/4/2010</time>
      <button type="button" aria-label="Show desktop" className="h-full w-[7px] border-l border-[#55595d] bg-linear-to-br from-[#4b4e52] to-[#131517]" />
    </footer>
  );
}

export default function App() {
  return (
    <main className="relative h-screen min-h-[500px] overflow-hidden bg-black font-[Lato,'Open_Sans',sans-serif] text-[6px] leading-[8px]">
      {shortcuts.map((s) => <DesktopIcon key={s.label + s.col + s.row} item={s} />)}
      <Explorer
        place="TEMP2"
        search="Search TEM..."
        nodes={tree(subfolders, 'Favorites')}
        files={tempFiles}
        count="16 items"
        className="top-[52px] left-[169px] h-[405px] w-[192px]"
      />
      <Explorer
        place="alps"
        search="Search alps"
        nodes={tree([], 'New Volume (E:)')}
        files={alpsFiles}
        count="17 items"
        className="top-[44px] left-[401px] h-[309px] w-[196px]"
      />
      <Browser />
      <Taskbar />
    </main>
  );
}
